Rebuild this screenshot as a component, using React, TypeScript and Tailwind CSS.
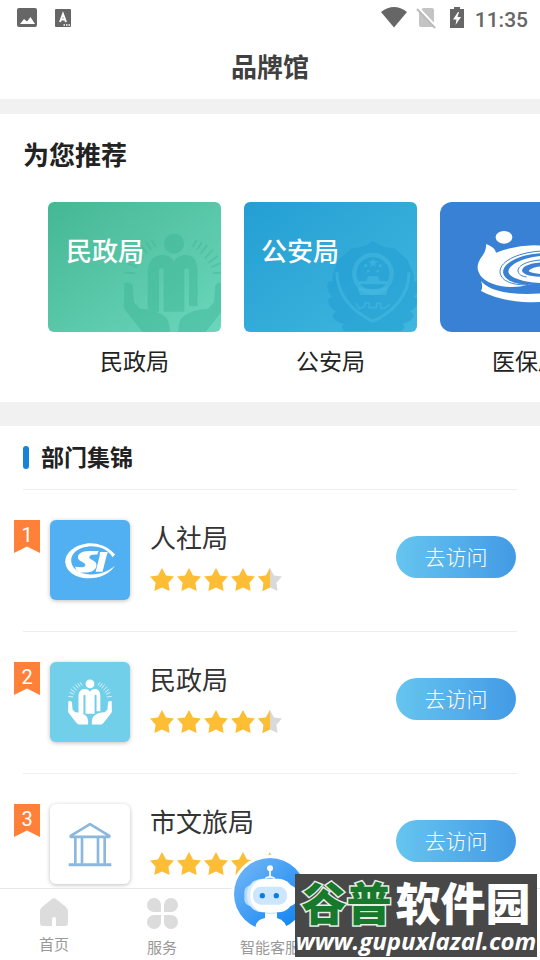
import type { ReactNode } from "react";

interface Department {
  rank: number;
  name: string;
  tile: string;
  logo: ReactNode;
}

function HandsArt() {
  return (
    <g>
      <circle cx="402" cy="146" r="30" />
      <path d="M323 334V232C323 198 342 180 366 180C384 180 396 187 402 200C408 187 420 180 438 180C460 180 473 198 473 232V334H447V228C447 217 433 217 433 228V350H371V228C371 217 357 217 357 228V350H340C330 350 323 345 323 334Z" />
      <path d="M253 264Q267 260 278 270L282 322L300 341Q350 343 376 366Q392 382 389 424H322Q306 412 296 397L256 346Q250 338 252 322Z" />
      <path d="M551 264Q537 260 526 270L522 322L504 341Q454 343 428 366Q412 382 415 424H482Q498 412 508 397L548 346Q554 338 552 322Z" />
      <path
        d="M334 135L347 156M318 142L334 165M302 150L322 176M285 164L310 190M270 182L299 204M262 204L291 217M253 232L286 235M470 135L457 156M486 142L470 165M502 150L482 176M519 164L494 190M534 182L505 204M542 204L513 217M551 232L518 235"
        fill="none"
        stroke="currentColor"
        strokeWidth="5"
      />
    </g>
  );
}

function HandsLogo() {
  return (
    <svg viewBox="244 112 316 316" className="h-[46px] w-[46px] text-white" fill="currentColor" aria-hidden="true">
      <HandsArt />
    </svg>
  );
}

function HandsWatermark() {
  return (
    <svg viewBox="24 21 519 390" className="absolute inset-0 h-full w-full text-[#3db496] opacity-45" fill="currentColor" aria-hidden="true">
      <HandsArt />
    </svg>
  );
}

function PoliceWatermark() {
  return (
    <svg viewBox="24 21 519 390" className="absolute inset-0 h-full w-full" aria-hidden="true">
      <g fill="#1f9bd0" opacity="0.5">
        <path d="M300 215Q287 235 290 262Q276 250 274 272Q274 295 290 306Q275 305 277 322Q282 342 303 350Q287 352 292 368Q302 384 326 386Q310 396 326 408H496Q512 396 498 386Q524 382 532 366Q536 352 520 350Q541 340 546 322Q546 306 532 306Q548 294 549 272Q546 250 533 262Q536 235 523 215L514 195L476 160Q438 160 411 138Q384 160 346 160L308 195Z" />
      </g>
      <g fill="none" stroke="#45b9e2" opacity="0.6">
        <path d="M303 232C302 300 350 350 411 379C472 350 520 300 519 232" strokeWidth="9" />
        <circle cx="411" cy="236" r="56" strokeWidth="13" />
        <path d="M360 325L370 342L386 334V324H399V338H422V326H434V340H446L462 327" strokeWidth="5" />
      </g>
      <g fill="#45b9e2" opacity="0.65">
        <path d="M411 188L415 199L426 199L417 206L420 217L411 210L402 217L405 206L396 199L407 199Z" />
        <circle cx="389" cy="212" r="5" />
        <circle cx="433" cy="212" r="5" />
        <circle cx="397" cy="228" r="4" />
        <circle cx="425" cy="228" r="4" />
        <path d="M397 244H425L432 258H454V268H368V258H390Z" />
        <path d="M364 275Q411 289 458 275L450 300H372Z" />
      </g>
    </svg>
  );
}

function MedicalLogo() {
  return (
    <svg viewBox="30 21 519 390" className="h-full w-full" aria-hidden="true">
      <ellipse cx="222" cy="127" rx="25" ry="19" fill="#fff" />
      <path
        d="M168 147Q170 166 156 184Q139 207 144 226Q153 262 216 274Q260 280 294 269L400 272Q440 225 410 175Q380 151 310 151Q250 153 198 173Q195 156 168 147Z"
        fill="#fff"
      />
      <path d="M153 258Q176 286 240 294Q310 302 400 287V314Q340 324 280 321Q203 315 153 288Q160 274 153 258Z" fill="#fff" />
      <g fill="none" stroke="#3981d5" strokeWidth="3">
        <path d="M340 168C272 170 210 196 210 230C211 255 242 272 294 269" />
        <path d="M350 194C294 195 263 211 264 228C266 239 275 244 290 246" />
      </g>
      <path
        d="M340 174C276 176 219 202 219 232C222 254 248 266 294 269L400 274V262C300 272 236 250 235 230C236 208 280 185 350 181Z"
        fill="#3981d5"
      />
      <path d="M350 202C304 202 277 213 276 227C278 237 300 246 350 246Z" fill="#3981d5" />
      <path d="M350 214C320 213 298 221 296 229Q314 238 350 237Z" fill="#fff" />
    </svg>
  );
}

function SocialLogo() {
  return (
    <svg viewBox="0 0 156 112" className="h-[37px] w-[52px]" aria-hidden="true">
      <path
        d="M154 38C128 9 93 1 65 5C29 10 3 34 3 59C4 88 34 110 72 110C107 111 137 97 154 72C132 91 105 99 79 98C45 97 21 79 21 56C21 34 42 17 70 14C101 10 132 21 146 46Z"
        fill="#fff"
      />
      <path
        d="M104 27H76C51 27 39 37 42 50C45 60 66 62 64 71C62 77 52 77 33 75L36 84L47 92H70C90 91 100 79 97 66C94 55 75 53 76 46C77 40 83 38 100 38Z"
        fill="#fff"
      />
      <path d="M108 30H132L128 42L116 90H95L107 43Z" fill="#fff" />
    </svg>
  );
}

function TempleLogo() {
  return (
    <svg viewBox="0 0 132 134" className="h-[45px] w-11" fill="none" stroke="#8bb8dc" aria-hidden="true">
      <path d="M66 6L8 41V44H124V41Z" strokeWidth="8" strokeLinejoin="round" />
      <path d="M2 128H130" strokeWidth="9" />
      <path d="M22 46V125M42 46V125M90 46V125M110 46V125" strokeWidth="8" />
    </svg>
  );
}

const departments: Department[] = [
  { rank: 1, name: "人社局", tile: "bg-[#51b0f1]", logo: <SocialLogo /> },
  { rank: 2, name: "民政局", tile: "bg-[#72cfe9]", logo: <HandsLogo /> },
  { rank: 3, name: "市文旅局", tile: "bg-white", logo: <TempleLogo /> }
];

function StatusBar() {
  return (
    <div className="flex h-9 shrink-0 items-center justify-between pr-3 pl-4 text-[#666]">
      <div className="flex items-center gap-4">
        <svg viewBox="0 0 22 22" className="h-[22px] w-[22px]" aria-hidden="true">
          <rect x="1" y="1" width="20" height="19" rx="2" fill="currentColor" />
          <path d="M4 17L8 12L11 14.500L14.500 10L19 17Z" fill="#fff" />
        </svg>
        <svg viewBox="0 0 18 22" className="h-[22px] w-[18px]" aria-hidden="true">
          <rect x="1" y="2" width="16" height="18" rx="1" fill="currentColor" />
          <path d="M6 15L9 7L12 15M7 12.500H11" fill="none" stroke="#fff" strokeWidth="2" />
          <path d="M9.500 18H17" stroke="#fff" strokeWidth="1.500" strokeDasharray="1.500 1" />
        </svg>
      </div>
      <div className="flex items-center">
        <svg viewBox="0 0 26 22" className="h-[22px] w-[26px]" aria-hidden="true">
          <path d="M0 5Q13 -5 26 5L13 20.500Z" fill="currentColor" />
        </svg>
        <svg viewBox="0 0 20 22" className="ml-[9px] h-[22px] w-5" aria-hidden="true">
          <path d="M7 1H16Q18 1 18 3V18Q18 20 16 20H5Q3 20 3 18V5Z" fill="#c4c4c4" />
          <path d="M2 1L20 20" stroke="#fff" strokeWidth="3" />
          <path d="M1 2L19 21" stroke="#bbb" strokeWidth="2" />
        </svg>
        <svg viewBox="0 0 14 22" className="ml-3.5 h-[22px] w-3.5" aria-hidden="true">
          <path d="M4 0H10V2H14V21H0V2H4Z" fill="currentColor" />
          <path d="M8 5L3 12.500H6.500L5.500 18L11 10H7.500L9 5Z" fill="#fff" />
        </svg>
        <span className="ml-[11px] pt-1 font-['Roboto',sans-serif] text-[21px] leading-8 font-medium">11:35</span>
      </div>
    </div>
  );
}

function BrandCard({ name, children }: { name: string; children: ReactNode }) {
  return (
    <a href="#" className="flex w-[173px] shrink-0 flex-col gap-3">
      {children}
      <span className="pt-0.5 text-center text-[23px] leading-[34px] text-[#222]">{name}</span>
    </a>
  );
}

function Rating() {
  const star = "M12 0L16 7.600L24 8.600L18.400 14.800L19.600 23L12 19.600L4.400 23L5.600 14.800L0 8.600L8 7.600Z";
  return (
    <div className="mt-3 flex gap-[3px]" role="img" aria-label="4.5">
      {[1, 2, 3, 4].map((n) => (
        <svg key={n} viewBox="0 0 24 24" className="h-6 w-6" fill="#fdbd34">
          <path d={star} />
        </svg>
      ))}
      <svg viewBox="0 0 24 24" className="h-6 w-6">
        <path d={star} fill="#d9d9d9" />
        <path d="M12 0V19.600L4.400 23L5.600 14.800L0 8.600L8 7.600Z" fill="#fdbd34" />
      </svg>
    </div>
  );
}

function DepartmentRow({ department }: { department: Department }) {
  return (
    <li>
      <div className="mx-[23px] h-px bg-[#eee]" />
      <div className="flex items-start pt-[30px] pr-6 pb-[31px] pl-3.5">
        <div className="h-[33px] w-[26px] bg-[#ff8139] text-center font-['Roboto',sans-serif] text-xl leading-[30px] text-white [clip-path:polygon(0_0,100%_0,100%_100%,50%_80%,0_100%)]">
          {department.rank}
        </div>
        <div className={`ml-2.5 flex h-20 w-20 items-center justify-center rounded-md shadow-[0_1px_4px_rgba(0,0,0,0.25)] ${department.tile}`}>
          {department.logo}
        </div>
        <div className="ml-5 flex-1">
          <h3 className="pt-0.5 text-[26px] leading-[34px] text-[#333]">{department.name}</h3>
          <Rating />
        </div>
        <button className="mt-4 h-[42px] w-[120px] rounded-full bg-linear-to-r from-[#66c5ef] to-[#439ae5] pt-1 text-[21px] font-light text-white">
          去访问
        </button>
      </div>
    </li>
  );
}

function Robot() {
  return (
    <svg viewBox="33 44 234 234" className="-mt-[34px] h-[78px] w-[78px] shrink-0" aria-hidden="true">
      <defs>
        <linearGradient id="robot-bg" x1="0" y1="0" x2="1" y2="1">
          <stop offset="0.100" stopColor="#6cb4f8" />
          <stop offset="1" stopColor="#087ff0" />
        </linearGradient>
      </defs>
      <circle cx="150" cy="161" r="117" fill="#fff" />
      <circle cx="150" cy="161" r="108" fill="url(#robot-bg)" />
      <path d="M106 280V262Q107 238 135 233V210H171V233Q200 239 204 280Z" fill="#fff" />
      <path d="M80 262H224V285H80Z" fill="#fff" />
      <path d="M135 215Q153 220 171 215V219Q153 225 135 219Z" fill="#cfe6fd" />
      <circle cx="150" cy="84" r="9" fill="#fff" />
      <path d="M150 86V112M136 114Q150 105 164 114" fill="none" stroke="#fff" strokeWidth="5" />
      <rect x="73" y="135" width="40" height="62" rx="20" fill="#b4d9fd" />
      <rect x="187" y="135" width="42" height="62" rx="20" fill="#fff" />
      <rect x="81" y="115" width="130" height="101" rx="47" fill="#d9ecfe" />
      <rect x="91" y="115" width="130" height="101" rx="47" fill="#fff" />
      <rect x="99" y="139" width="102" height="54" rx="24" fill="#cce6fd" />
      <circle cx="127" cy="166" r="8" fill="#087ce5" />
      <circle cx="169" cy="166" r="8" fill="#087ce5" />
    </svg>
  );
}

function BottomNav() {
  return (
    <nav className="relative grid h-[72px] shrink-0 grid-cols-5 border-t border-[#e7e7e7] bg-white text-[15px] leading-5 text-[#999]">
      <a href="#" className="flex flex-col items-center gap-[9px] pt-[9px]">
        <svg viewBox="0 0 28 28" className="h-7 w-7" fill="#dcdcdc" aria-hidden="true">
          <path d="M12 1Q14 -0.500 16 1L26 9Q28 11 28 13V25Q28 28 25 28H16V21Q16 19 14 19Q12 19 12 21V28H3Q0 28 0 25V13Q0 11 2 9Z" />
        </svg>
        首页
      </a>
      <a href="#" className="flex flex-col items-center gap-[9px] pt-[9px]">
        <svg viewBox="0 0 31 31" className="h-[31px] w-[31px]" fill="#dcdcdc" aria-hidden="true">
          <path d="M7 0A7 7 0 0 1 14 7V14H7A7 7 0 0 1 7 0ZM24 0A7 7 0 0 1 24 14H17V7A7 7 0 0 1 24 0ZM7 17H14V24A7 7 0 1 1 7 17ZM17 17H24A7 7 0 1 1 17 24Z" />
        </svg>
        服务
      </a>
      <a href="#" className="flex flex-col items-center gap-[5px]">
        <Robot />
        智能客服
      </a>
    </nav>
  );
}

export default function App() {
  return (
    <div className="relative flex h-screen flex-col overflow-hidden bg-white font-['Roboto','Noto_Sans_CJK_SC',sans-serif]">
      <StatusBar />
      <header className="flex h-[63px] shrink-0 items-center justify-center pt-0.5">
        <h1 className="text-[26px] font-bold text-[#404040]">品牌馆</h1>
      </header>

      <main className="min-h-0 flex-1 overflow-y-auto [scrollbar-width:none]">
        <section className="border-t-[15px] border-b-[24px] border-[#f1f1f1] pt-6 pb-[22px]">
          <h2 className="pl-[23px] text-[26px] leading-9 font-bold text-[#222]">为您推荐</h2>
          <div className="mt-7 flex gap-[23px] overflow-x-auto pl-12 [scrollbar-width:none]">
            <BrandCard name="民政局">
              <div className="relative h-[130px] overflow-hidden rounded-md bg-linear-to-br from-[#45b794] to-[#6bd7bd]">
                <HandsWatermark />
                <span className="relative block pt-8 pl-[18px] text-[26px] leading-9 font-medium text-white">民政局</span>
              </div>
            </BrandCard>
            <BrandCard name="公安局">
              <div className="relative h-[130px] overflow-hidden rounded-md bg-linear-to-br from-[#239fd3] to-[#40b7df]">
                <PoliceWatermark />
                <span className="relative block pt-8 pl-[17px] text-[26px] leading-9 font-medium text-white">公安局</span>
              </div>
            </BrandCard>
            <BrandCard name="医保局">
              <div className="h-[130px] overflow-hidden rounded-xl bg-[#3981d5]">
                <MedicalLogo />
              </div>
            </BrandCard>
          </div>
        </section>

        <section>
          <div className="flex h-[63px] items-center gap-3 pl-[23px]">
            <span className="h-[23px] w-1.5 rounded-full bg-[#1682d8]" />
            <h2 className="pt-1 text-[23px] font-bold text-[#222]">部门集锦</h2>
          </div>
          <ul>
            {departments.map((department) => (
              <DepartmentRow key={department.rank} department={department} />
            ))}
          </ul>
        </section>
      </main>

      <BottomNav />

      <div className="absolute right-[3px] bottom-[3px] flex h-[83px] w-[242px] flex-col items-center overflow-hidden bg-[#484848] whitespace-nowrap text-white">
        <div className="flex gap-1 pt-2 text-[45px] leading-[48px] font-black">
          <span className="text-[#18792c] [-webkit-text-stroke:3px_#e5eee5] [paint-order:stroke_fill]">谷普</span>
          <span>软件园</span>
        </div>
        <div className="font-['Open_Sans',sans-serif] text-[24px] leading-[22px] font-bold italic">www.gupuxlazal.com</div>
      </div>
    </div>
  );
}
